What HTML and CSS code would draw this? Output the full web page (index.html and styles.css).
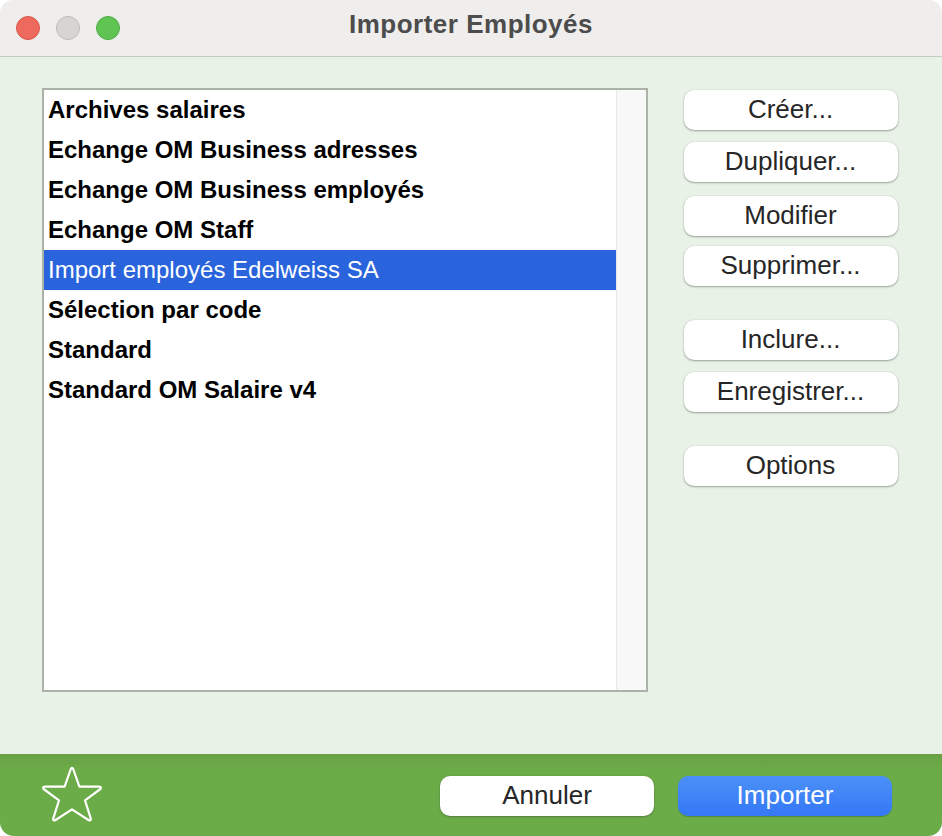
FILE: index.html
```html
<!DOCTYPE html>
<html lang="fr">
<head>
<meta charset="utf-8">
<title>Importer Employés</title>
<link rel="stylesheet" href="styles.css">
</head>
<body>
<div class="window">
  <header class="titlebar">
    <div class="lights">
      <span class="light light-close"></span>
      <span class="light light-min"></span>
      <span class="light light-max"></span>
    </div>
    <div class="title">Importer Employés</div>
  </header>
  <main class="content">
    <div class="list">
      <ul class="rows">
        <li class="row">Archives salaires</li>
        <li class="row">Echange OM Business adresses</li>
        <li class="row">Echange OM Business employés</li>
        <li class="row">Echange OM Staff</li>
        <li class="row row-selected">Import employés Edelweiss SA</li>
        <li class="row">Sélection par code</li>
        <li class="row">Standard</li>
        <li class="row">Standard OM Salaire v4</li>
      </ul>
      <div class="scrollbar"></div>
    </div>
    <div class="actions">
      <button class="btn">Créer...</button>
      <button class="btn gap-12">Dupliquer...</button>
      <button class="btn gap-14">Modifier</button>
      <button class="btn gap-10">Supprimer...</button>
      <button class="btn gap-34">Inclure...</button>
      <button class="btn gap-12">Enregistrer...</button>
      <button class="btn gap-34">Options</button>
    </div>
  </main>
  <footer class="footer">
    <svg class="star" width="62" height="60" viewBox="0 0 62 60" aria-hidden="true">
      <path d="M29.8 4 Q31 1.8 32.2 4 L38.4 21.6 L58 21.6 Q61 22 59.4 24 L44 35.4 L49.8 53.6 Q50 56.4 47.4 55 L31 44.4 L14.6 55 Q12 56.4 12.2 53.6 L18 35.4 L2.6 24 Q1 22 4 21.6 L23.6 21.6 Z" fill="none" stroke="#fff" stroke-width="2.2" stroke-linejoin="round"/>
    </svg>
    <div class="footer-buttons">
      <button class="btn">Annuler</button>
      <button class="btn btn-primary">Importer</button>
    </div>
  </footer>
</div>
</body>
</html>
```
FILE: styles.css
```css
* { box-sizing: border-box; }
html, body { margin: 0; height: 100%; background: #fff; }
body { font-family: "Liberation Sans", Arial, sans-serif; overflow: hidden; }

.window {
  width: 942px;
  height: 836px;
  display: flex;
  flex-direction: column;
  border-radius: 14px;
  overflow: hidden;
  background: #e8f2e7;
}

.titlebar {
  height: 57px;
  flex: none;
  position: relative;
  display: flex;
  align-items: center;
  justify-content: center;
  background: #efeeec;
  border-bottom: 1px solid #c3cbc2;
  padding-bottom: 7px;
}
.lights {
  position: absolute;
  left: 16px;
  top: 16px;
  display: flex;
  gap: 16px;
}
.light {
  width: 24px;
  height: 24px;
  border-radius: 50%;
  border: 1px solid;
}
.light-close { background: #ee6a5f; border-color: #d9564c; }
.light-min { background: #d6d5d3; border-color: #bcbbb8; }
.light-max { background: #5fc454; border-color: #4fae46; }
.title {
  font-size: 26px;
  font-weight: 700;
  letter-spacing: 0.5px;
  color: #4c4c4c;
}

.content {
  flex: 1;
  display: flex;
  align-items: flex-start;
  padding: 31px 44px 0 42px;
  justify-content: space-between;
}

.list {
  width: 606px;
  height: 604px;
  display: flex;
  background: #fff;
  border: 2px solid #abb3a9;
}
.rows {
  list-style: none;
  margin: 0;
  padding: 0;
  flex: 1;
  min-width: 0;
}
.row {
  height: 40px;
  line-height: 40px;
  padding-left: 4px;
  font-size: 24px;
  font-weight: 700;
  color: #000;
  white-space: nowrap;
}
.row-selected {
  background: #2964dc;
  color: #fff;
  font-weight: 400;
}
.scrollbar {
  width: 30px;
  flex: none;
  background: #f8f8f8;
  border-left: 1px solid #e8e8e8;
}

.actions {
  width: 214px;
  padding-top: 2px;
  display: flex;
  flex-direction: column;
}
.btn {
  width: 214px;
  height: 40px;
  padding: 0 0 1px;
  border: 0;
  border-radius: 10px;
  background: #fff;
  color: #262626;
  font-family: inherit;
  font-size: 26px;
  box-shadow: 0 1px 2px rgba(60, 70, 60, 0.45), 0 0 1px rgba(60, 70, 60, 0.25);
}
.actions .btn { padding-right: 1px; }
.gap-10 { margin-top: 10px; }
.gap-12 { margin-top: 12px; }
.gap-14 { margin-top: 14px; }
.gap-34 { margin-top: 34px; }

.footer {
  height: 82px;
  flex: none;
  display: flex;
  align-items: flex-start;
  justify-content: space-between;
  padding: 0 50px 0 41px;
  background: linear-gradient(to bottom, #68a145 0, #6cac48 16px);
}
.star { margin-top: 11px; }
.footer-buttons {
  display: flex;
  gap: 24px;
  margin-top: 22px;
}
.btn-primary {
  background: linear-gradient(to bottom, #4b90f7, #3478f6);
  color: #fff;
  box-shadow: 0 1px 1px rgba(40, 70, 30, 0.35);
}
```
